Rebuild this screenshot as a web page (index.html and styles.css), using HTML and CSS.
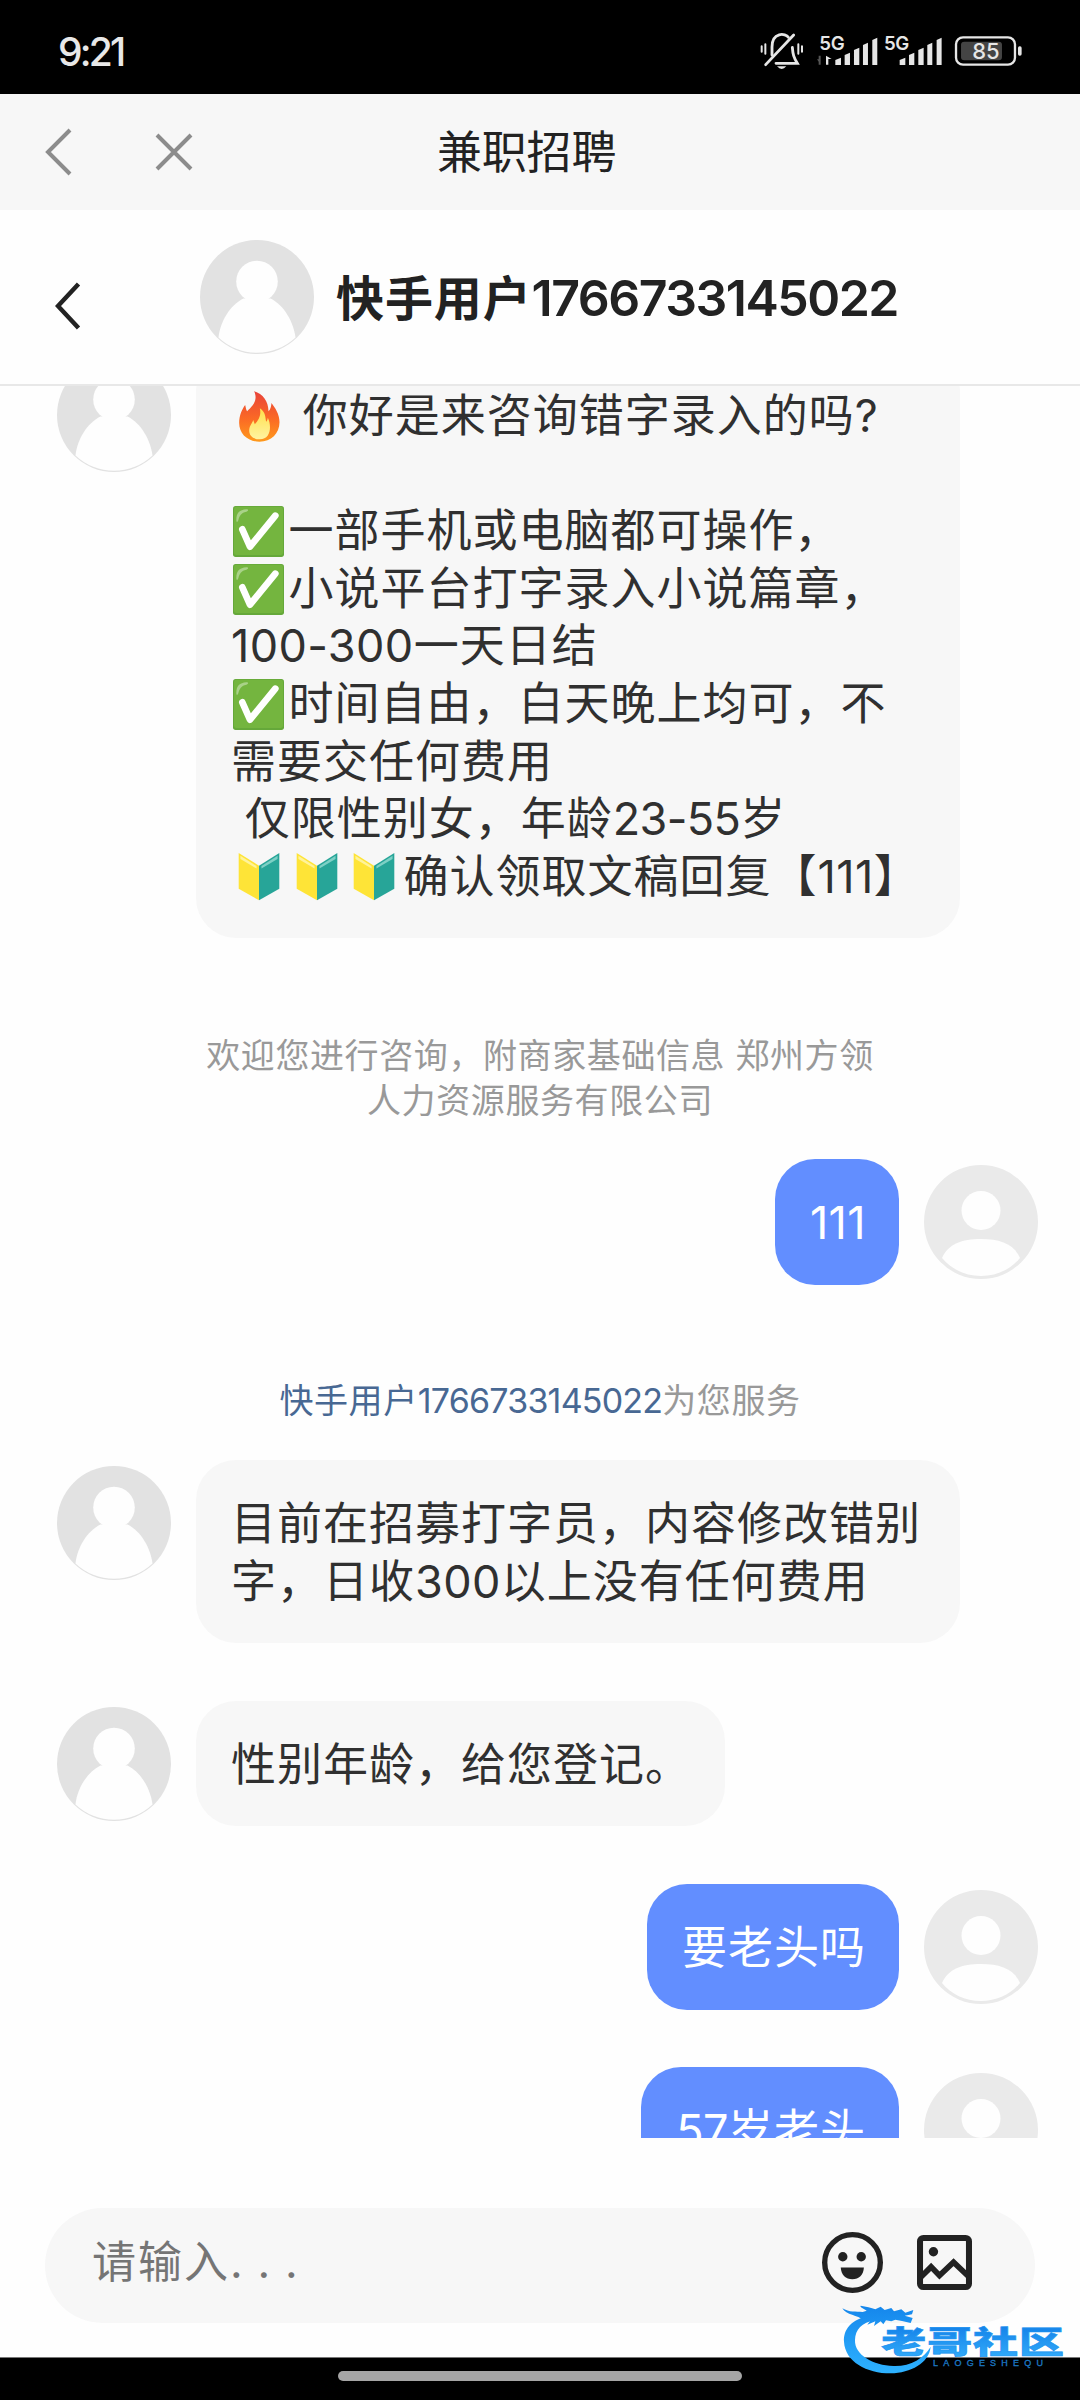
FILE: index.html
```html
<!DOCTYPE html>
<html lang="zh-CN">
<head>
<meta charset="utf-8">
<title>兼职招聘</title>
<link rel="stylesheet" href="styles.css">
</head>
<body>
<svg class="defs" width="0" height="0" aria-hidden="true">
  <defs>
    <linearGradient id="flameOuter" x1="0" y1="0" x2="0" y2="1"><stop offset="0" stop-color="#e8433a"/><stop offset=".55" stop-color="#fb6a25"/><stop offset="1" stop-color="#ff9a1c"/></linearGradient>
    <linearGradient id="flameInner" x1="0" y1="0" x2="0" y2="1"><stop offset="0" stop-color="#ffe04a"/><stop offset="1" stop-color="#fff3a0"/></linearGradient>
    <linearGradient id="brand" gradientUnits="userSpaceOnUse" x1="0" y1="50" x2="0" y2="250"><stop offset="0" stop-color="#1587ec"/><stop offset="1" stop-color="#2eb2ff"/></linearGradient>
    <linearGradient id="brandText" x1="0" y1="0" x2="0" y2="1"><stop offset=".2" stop-color="#1583ea"/><stop offset="1" stop-color="#35b0fb"/></linearGradient>
  </defs>
  <symbol id="agent" viewBox="0 0 114 114">
    <circle cx="57" cy="57" r="57" fill="#e2e2e2"/>
    <circle cx="57" cy="41.5" r="20.8" fill="#fefefe"/>
    <path d="M43.500 58.500C30 65 20 82 18.500 97.500A56 56 0 0 0 95.500 97.500C93.500 82 84 65 70.500 58.500Z" fill="#fefefe"/>
  </symbol>
  <symbol id="visitor" viewBox="0 0 114 114">
    <circle cx="57" cy="57" r="57" fill="#eaeaea"/>
    <circle cx="57" cy="45.500" r="19.500" fill="#fefefe"/>
    <path d="M18 93C24 79 38 74 57 74S90 79 96 93C87 104 73 111 57 111S27 104 18 93Z" fill="#fefefe"/>
  </symbol>
  <symbol id="check" viewBox="0 0 153 153">
    <rect width="153" height="153" rx="8" fill="#65a83a"/>
    <rect x="3" y="2" width="147" height="145" rx="7" fill="#74b53f"/>
    <path d="M10 42C10 20 20 12 40 10C48 10 46 16 40 17C25 20 19 29 16 43C13 50 10 49 10 42Z" fill="#a9d288"/>
    <path d="M28 70L51 122L127 29" fill="none" stroke="#fff" stroke-width="20" stroke-linecap="round" stroke-linejoin="round"/>
  </symbol>
  <symbol id="shield" viewBox="0 0 120 138">
    <path d="M2 2L60 38V137L2 104Z" fill="#fee437"/>
    <path d="M118 2L60 38V137L118 104Z" fill="#27a598"/>
    <path d="M7 10L53 39V46L7 19Z" fill="#fff39a"/>
    <path d="M113 10L67 39V46L113 19Z" fill="#7dd0c5"/>
  </symbol>
  <symbol id="flame" viewBox="38 16 128 156">
    <path d="M86 20C112 27 129 51 129 80C135 74 137 65 138 55C149 70 162 88 162 113C162 147 137 171 102 171C67 171 41 148 41 115C41 92 50 73 59 61C61 70 62 76 65 80C79 66 99 49 86 20Z" fill="url(#flameOuter)"/>
    <path d="M103 71C121 83 119 98 122 111C125 108 126 104 127 99C139 124 136 164 103 164C78 164 66 147 73 126C77 117 82 113 83 106L88 119C99 106 108 92 103 71Z" fill="url(#flameInner)"/>
  </symbol>
</svg>

<div class="screen">
  <header class="status">
    <span class="clock">9:21</span>
    <div class="status-icons">
      <svg width="55" height="43.300" viewBox="25 15 165 130" fill="none" stroke="#e6e6e6" stroke-width="8.500" stroke-linecap="round">
        <path d="M67 90V66C67 20 108 24 116 37M128 67C130 90 132 97 143 115H79"/>
        <path d="M48 119L132 30"/>
        <path d="M36 64V80M47 58V86M146 58V86M157 64V80" stroke-width="6"/>
        <path d="M82 124H110Q96 140 82 124Z" fill="#e6e6e6" stroke="none"/>
      </svg>
      <svg width="68.300" height="43.300" viewBox="190 15 205 130" fill="#e6e6e6">
        <text class="net" x="209" y="74" textLength="76">5G</text>
        <path d="M213 92V119H207V110L202 103H207V92Z" fill="#555"/>
        <path d="M229 92L246 102H236V119H229Z"/>
        <path d="M257 105L274 98V120H257ZM285 90L301 83V120H285ZM313 75L329 68V120H313ZM340 60L355 53V120H340ZM368 45L383 38V120H368Z"/>
      </svg>
      <svg width="68.300" height="43.300" viewBox="395 15 205 130" fill="#e6e6e6">
        <text class="net" x="401" y="74" textLength="76">5G</text>
        <path d="M448 105L465 98V120H448ZM476 90L492 83V120H476ZM504 75L520 68V120H504ZM531 60L546 53V120H531ZM559 45L574 38V120H559Z"/>
      </svg>
      <svg width="72" height="43.300" viewBox="600 15 216 130">
        <rect x="618" y="37" width="177" height="82" rx="21" fill="none" stroke="#e6e6e6" stroke-width="7"/>
        <rect x="633" y="50" width="123" height="56" rx="10" fill="#444"/>
        <rect x="804" y="64" width="11" height="28" rx="5" fill="#e6e6e6"/>
        <text class="level" x="667" y="102" textLength="82">85</text>
      </svg>
    </div>
  </header>

  <nav class="appbar">
    <svg class="appbar-back" width="28" height="48" viewBox="0 0 28 48"><path d="M25 2L3 24L25 46"/></svg>
    <svg class="appbar-close" width="38" height="38" viewBox="0 0 38 38"><path d="M2 2L36 36M36 2L2 36"/></svg>
    <h1 class="appbar-title">兼职招聘</h1>
  </nav>

  <div class="peer">
    <svg class="peer-back" width="26" height="48" viewBox="0 0 26 48"><path d="M23.500 2L3 24L23.500 46"/></svg>
    <svg class="avatar"><use href="#agent"/></svg>
    <h2 class="peer-name">快手用户<span class="peer-id">1766733145022</span></h2>
  </div>

  <main class="chat">
    <div class="msg first">
      <svg class="avatar"><use href="#agent"/></svg>
      <div class="bubble long"><svg class="emoji flame"><use href="#flame"/></svg> 你好是来咨询错字录入的吗?<br><br><svg class="emoji check"><use href="#check"/></svg>一部手机或电脑都可操作，<br><svg class="emoji check"><use href="#check"/></svg>小说平台打字录入小说篇章，<br><span class="num">100-300</span>一天日结<br><svg class="emoji check"><use href="#check"/></svg>时间自由，白天晚上均可，不<br>需要交任何费用<br>&nbsp;仅限性别女，年龄<span class="num age">23-55</span>岁<br><svg class="emoji shield"><use href="#shield"/></svg><svg class="emoji shield"><use href="#shield"/></svg><svg class="emoji shield"><use href="#shield"/></svg>确认领取文稿回复【<span class="num">111</span>】</div>
    </div>
    <p class="notice welcome">欢迎您进行咨询，附商家基础信息 郑州方领<br>人力资源服务有限公司</p>
    <div class="msg mine">
      <div class="bubble"><span class="num">111</span></div>
      <svg class="avatar"><use href="#visitor"/></svg>
    </div>
    <p class="notice serving"><a class="agent-link">快手用户<span class="agent-id">1766733145022</span></a>为您服务</p>
    <div class="msg">
      <svg class="avatar"><use href="#agent"/></svg>
      <div class="bubble long">目前在招募打字员，内容修改错别<br>字，日收<span class="num">300</span>以上没有任何费用</div>
    </div>
    <div class="msg">
      <svg class="avatar"><use href="#agent"/></svg>
      <div class="bubble">性别年龄，给您登记。</div>
    </div>
    <div class="msg mine">
      <div class="bubble">要老头吗</div>
      <svg class="avatar"><use href="#visitor"/></svg>
    </div>
    <div class="msg mine">
      <div class="bubble"><span class="num age">57</span>岁老头</div>
      <svg class="avatar"><use href="#visitor"/></svg>
    </div>
  </main>

  <footer class="composer">
    <div class="field">
      <span class="placeholder">请输入<span class="dots">...</span></span>
      <svg class="tool" width="61" height="61" viewBox="246 154 182 182">
        <circle cx="337" cy="245" r="83" fill="none" stroke="#222" stroke-width="16"/>
        <circle cx="308" cy="228" r="14" fill="#222"/><circle cx="363" cy="228" r="14" fill="#222"/>
        <path d="M302 260H371C370 282 356 295 336.500 295S303 282 302 260Z" fill="#222"/>
      </svg>
      <svg class="tool" width="55" height="55" viewBox="531 164 164 164">
        <rect x="540" y="173" width="146" height="146" rx="10" fill="none" stroke="#222" stroke-width="18"/>
        <circle cx="580" cy="214" r="14" fill="#222"/>
        <path d="M542 290L573 259L598 285L640 245L684 287" fill="none" stroke="#222" stroke-width="17"/>
      </svg>
    </div>
  </footer>
  <div class="gesture"><span class="gesture-pill"></span></div>

  <svg class="watermark" viewBox="0 0 735 270">
    <g fill="url(#brand)">
      <path d="M122 76C62 88 40 120 42 155C45 215 110 250 182 250C242 248 297 220 302 170C282 205 240 230 190 228C130 226 73 195 75 150C76 118 95 98 135 90Z"/>
      <path d="M37 55C58 68 78 64 98 66L110 62C98 54 88 50 92 47C108 50 124 52 136 58L152 50L164 60L184 54L192 64L214 58L226 68L250 60L246 73L224 77L248 84L242 99L216 93L196 89L184 94L168 91L160 103L152 94L132 108L136 94L112 104L122 90L100 92C84 74 48 76 37 55Z"/>
    </g>
    <text class="brand-name" transform="translate(154 189) scale(1.480 1)" x="0" y="0" textLength="370">老哥社区</text>
    <text class="brand-latin" x="309" y="228" textLength="330">LAOGESHEQU</text>
  </svg>
</div>
</body>
</html>
```
FILE: styles.css
```css
* { box-sizing: border-box; }
body {
  margin: 0;
  background: #fefefe;
  font-family: Inter, "Noto Sans CJK SC", sans-serif;
  color: #303030;
}
svg { display: block; flex: none; }
h1, h2, p { margin: 0; }
.defs { position: absolute; }
.screen {
  position: relative;
  display: flex;
  flex-direction: column;
  width: 1080px;
  height: 2400px;
  overflow: hidden;
}

.status {
  display: flex;
  justify-content: space-between;
  height: 94px;
  padding: 30px 58px 0 58px;
  background: #000;
}
.clock {
  font-size: 39px;
  font-weight: 500;
  line-height: 43px;
  letter-spacing: -2.800px;
  color: #e8e8e8;
}
.status-icons { display: flex; }
.net { font: 600 56px Inter, sans-serif; }
.level { font: 500 66px Inter, sans-serif; fill: #e6e6e6; }

.appbar {
  display: grid;
  grid-template-columns: 28px 38px 1fr;
  align-items: center;
  height: 116px;
  padding: 0 70px 0 45px;
  background: #f7f7f7;
}
.appbar path { fill: none; stroke: #8c8c8c; stroke-width: 4; }
.appbar-close { margin-left: 82px; }
.appbar-title {
  padding-left: 326px;
  font-size: 45px;
  font-weight: 400;
  line-height: 60px;
  margin-top: 2px;
  letter-spacing: -.2px;
  color: #222;
}

.peer {
  display: flex;
  align-items: center;
  height: 176px;
  padding: 0 0 0 55px;
  border-bottom: 2px solid #e8e8e8;
}
.peer-back { margin: 18px 119px 0 0; }
.peer-back path { fill: none; stroke: #222; stroke-width: 4.500; }
.peer-name {
  margin: 3px 0 0 22px;
  font-size: 48px;
  font-weight: 700;
  line-height: 60px;
  letter-spacing: .9px;
  color: #222;
}
.peer-id { font-size: 50px; font-weight: 600; letter-spacing: -1.500px; }
.peer .avatar { margin: 0; }

.avatar { width: 114px; height: 114px; margin-top: 6px; }

.chat {
  display: flex;
  flex-direction: column;
  height: 1752px;
  overflow: hidden;
}
.msg {
  display: flex;
  flex: none;
  align-items: flex-start;
  gap: 25px;
  padding: 0 42px 0 57px;
  margin-bottom: 57.600px;
}
.msg.first { margin-top: -34px; margin-bottom: 95px; }
.msg.mine { justify-content: flex-end; }
.bubble {
  padding: 35px 34px 33px 35px;
  border-radius: 40px;
  background: #f7f7f7;
  font-size: 45px;
  line-height: 57.600px;
  letter-spacing: 1px;
  white-space: nowrap;
}
.bubble.long { width: 764px; }
.mine .bubble { padding-right: 33px; background: #628eff; color: #fff; }
.num { letter-spacing: .4px; }
.num.age { letter-spacing: -.6px; }

.emoji { display: inline-block; }
.emoji.check { width: 51px; height: 51px; margin: 0 4.500px -10px 2px; }
.emoji.flame { width: 43px; height: 52px; margin: 0 8px -10px 7px; }
.emoji.shield { width: 42px; height: 51px; margin: 0 8.500px -9px 7px; }

.notice {
  flex: none;
  font-size: 34px;
  line-height: 45px;
  letter-spacing: .6px;
  text-align: center;
  color: #999;
}
.welcome { margin-bottom: 36px; }
.serving { margin: 36px 0 37px; }
.agent-link { color: #486893; }
.agent-id { letter-spacing: -.8px; }
.mine:has(+ .serving) { margin-bottom: 57px; }

.composer {
  display: flex;
  height: 219px;
  padding: 70px 45px 34px;
}
.field {
  display: flex;
  flex: 1;
  align-items: center;
  padding: 0 63px 7px 47px;
  border-radius: 58px;
  background: #f7f7f7;
}
.placeholder {
  flex: 1;
  font-size: 44px;
  line-height: 60px;
  letter-spacing: 2px;
  color: #757575;
}
.dots { letter-spacing: 14.800px; }
.tool + .tool { margin-left: 34px; }

.gesture {
  display: flex;
  justify-content: center;
  height: 43px;
  padding-top: 13px;
  border-top: 1px solid #777;
  background: #000;
}
.gesture-pill { width: 404px; height: 10px; border-radius: 5px; background: #a5a5a5; }

.watermark {
  position: absolute;
  left: 830px;
  top: 2290px;
  width: 245px;
  height: 90px;
}
.brand-name {
  font: 900 91px "Noto Sans CJK SC", sans-serif;
  fill: url(#brandText);
  stroke: #2394f0;
  stroke-width: 2;
}
.brand-latin { font: 400 27px "Liberation Sans", sans-serif; fill: #1c78c4; stroke: #1c78c4; }
```
